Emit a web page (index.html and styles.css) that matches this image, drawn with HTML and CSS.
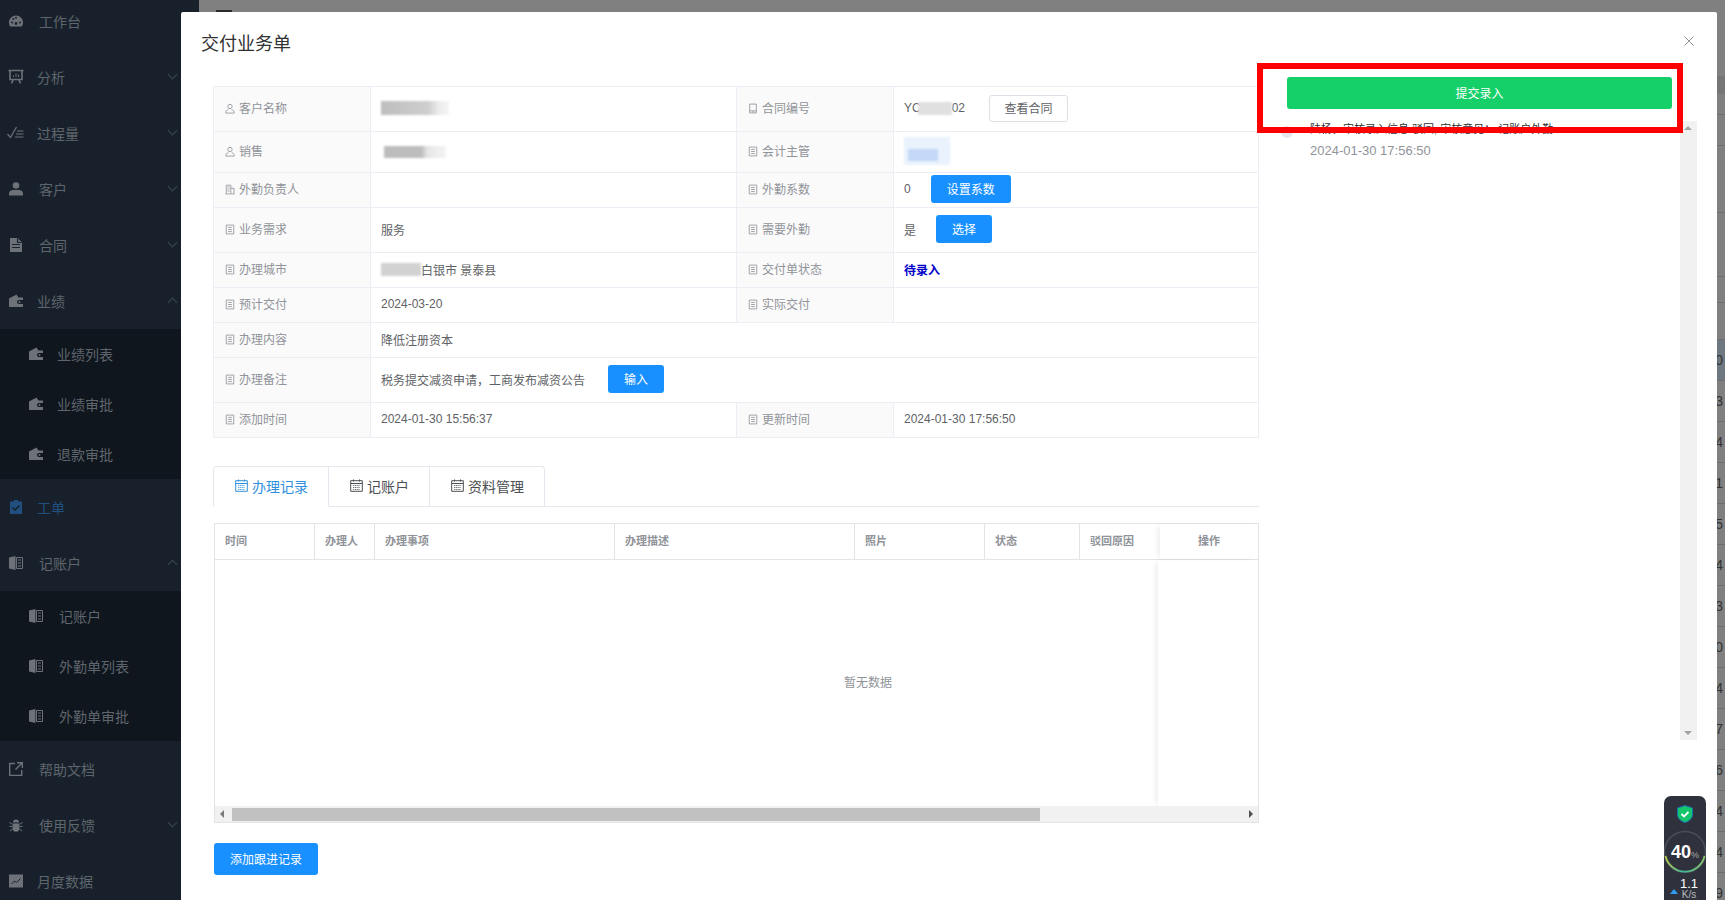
FILE: index.html
```html
<!DOCTYPE html>
<html lang="zh-CN">
<head>
    <meta charset="UTF-8">
    <title>交付业务单</title>
    <link rel="stylesheet" href="styles.css">
</head>
<body>

    <!-- Icon set -->
    <svg class="icon-defs" width="0" height="0">
        <defs>
            <linearGradient id="ring" x1="0" x2="1" y1="0" y2="0"><stop offset="0" stop-color="#b5c94a"/><stop offset=".45" stop-color="#3fb59a"/><stop offset="1" stop-color="#8cc46a"/></linearGradient>
        </defs>
        <symbol id="i-user" viewBox="0 0 12 12"><circle cx="6" cy="3.6" r="2.6" fill="none" stroke="currentColor"/><path d="M1 11.5v-1.2c0-1.6 1.6-2.6 3-2.8M11 11.5v-1.2c0-1.6-1.6-2.6-3-2.8M1 11.5h10" fill="none" stroke="currentColor"/></symbol>
        <symbol id="i-doc" viewBox="0 0 12 12"><path d="M1.500 .7h9v10.600h-9zM3.700 3.500h4.600M3.700 6h4.600M3.700 8.500h4.600" fill="none" stroke="currentColor"/></symbol>
        <symbol id="i-mobile" viewBox="0 0 12 12"><path d="M2 .7h8v10.600h-8zM2 8.800h8M5 10h2" fill="none" stroke="currentColor"/></symbol>
        <symbol id="i-office" viewBox="0 0 12 12"><path d="M1.500 11V.8h5.500V11M7 4.500h3.800V11M.5 11.300h11M3 3h2.500M3 5.500h2.500M3 8h2.500" fill="none" stroke="currentColor"/></symbol>
        <symbol id="i-date" viewBox="0 0 13 13"><path d="M.7 1.700h11.600v10.600h-11.600zM.7 4.500h11.600M3.500 .5v2M9.500 .5v2" fill="none" stroke="currentColor"/><path d="M3 6.500h7M3 8.500h7M3 10.500h7" fill="none" stroke="currentColor" stroke-width=".8" stroke-dasharray="1.200 .6"/></symbol>
        <symbol id="i-gauge" viewBox="0 0 14 14"><path d="M7 1.500a7 7 0 0 0-7 7c0 1.700.5 3 1.300 4h11.400c.8-1 1.300-2.300 1.300-4a7 7 0 0 0-7-7z" fill="currentColor"/><g fill="#18212b"><circle cx="3" cy="8.500" r="1"/><circle cx="4.300" cy="5" r="1"/><circle cx="7" cy="3.800" r="1"/><circle cx="11" cy="8.500" r="1"/><circle cx="7" cy="9.500" r="1.400"/></g></symbol>
        <symbol id="i-board" viewBox="0 0 16 16"><path d="M.5 1.500h15M2 2v8.500h12V2M5 11l-1.500 3.500M11 11l1.500 3.500" fill="none" stroke="currentColor" stroke-width="1.600"/><path d="M5.500 8V6.500M8 8V4.500M10.500 8V5.500" stroke="currentColor" fill="none"/></symbol>
        <symbol id="i-check" viewBox="0 0 17 14"><path d="M.5 8l3 3.500L9.500 1" fill="none" stroke="currentColor" stroke-width="1.200"/><path d="M10 5h6.500M9 8h7.500M8 11h8.500" fill="none" stroke="currentColor" stroke-width="1.200"/></symbol>
        <symbol id="i-person" viewBox="0 0 14 14"><circle cx="7" cy="3.500" r="3.300" fill="currentColor"/><path d="M0 13.500v-2c0-2.500 2.500-3.500 4.500-3.500h5c2 0 4.500 1 4.500 3.500v2z" fill="currentColor"/></symbol>
        <symbol id="i-file" viewBox="0 0 14 14"><path d="M1 0h7.500l4.500 4.500v9.500h-12z" fill="currentColor"/><path d="M3 6.500h8M3 9.500h8M8.500 .5v4h4" fill="none" stroke="#18212b" stroke-width="1.200"/></symbol>
        <symbol id="i-wallet" viewBox="0 0 14 14"><path d="M0 4.500l7.500-4 2 3h4.500v2.500h-4a2 2 0 0 0 0 4h4v3h-14z" fill="currentColor"/><circle cx="10.500" cy="8" r="1" fill="currentColor"/></symbol>
        <symbol id="i-clip" viewBox="0 0 14 14"><path d="M1 1.500h3.500a2.500 2 0 0 1 5 0h3.500v12.500h-12z" fill="currentColor"/><path d="M3.500 7.500l2.500 2.500 4.500-4.500" fill="none" stroke="#18212b" stroke-width="1.500"/></symbol>
        <symbol id="i-book" viewBox="0 0 14 14"><path d="M0 1.500l6.500-1.500v14l-6.500-1.500z" fill="currentColor"/><path d="M7.500 1.500h6v11h-6zM9 4h3M9 7h3M9 10h3" fill="none" stroke="currentColor"/></symbol>
        <symbol id="i-link" viewBox="0 0 14 14"><path d="M6 1.500h-5.300v12h12v-5.500M8 .7h5.300V6M13 1l-6.500 6.500" fill="none" stroke="currentColor" stroke-width="1.400"/></symbol>
        <symbol id="i-bug" viewBox="0 0 14 14"><path d="M4 4.500a3 3 0 0 1 6 0zM3.500 5.500h7v4.500a3.500 3.800 0 0 1-7 0z" fill="currentColor"/><path d="M3 6L.5 4.500M11 6l2.500-1.500M3 8.500H.5M11 8.500h2.500M3.500 11L1 13M10.500 11l2.500 2" stroke="currentColor" fill="none"/></symbol>
        <symbol id="i-chart" viewBox="0 0 14 14"><path d="M0 .5h14v13h-14z" fill="currentColor"/><path d="M2.500 10l3-3 2 1.500 4-4" fill="none" stroke="#18212b"/></symbol>
    </svg>

    <!-- Sidebar -->
    <aside class="sidebar">
        <div class="menu-item"><svg class="menu-icon"><use href="#i-gauge"/></svg><span>工作台</span></div>
        <div class="menu-item"><svg class="menu-icon icon-board"><use href="#i-board"/></svg><span class="tight">分析</span><i class="chevron"></i></div>
        <div class="menu-item"><svg class="menu-icon icon-check"><use href="#i-check"/></svg><span class="tight">过程量</span><i class="chevron"></i></div>
        <div class="menu-item"><svg class="menu-icon"><use href="#i-person"/></svg><span>客户</span><i class="chevron"></i></div>
        <div class="menu-item"><svg class="menu-icon"><use href="#i-file"/></svg><span>合同</span><i class="chevron"></i></div>
        <div class="menu-item"><svg class="menu-icon"><use href="#i-wallet"/></svg><span class="tight">业绩</span><i class="chevron up"></i></div>
        <div class="submenu">
            <div class="sub-item"><svg class="menu-icon"><use href="#i-wallet"/></svg><span>业绩列表</span></div>
            <div class="sub-item"><svg class="menu-icon"><use href="#i-wallet"/></svg><span>业绩审批</span></div>
            <div class="sub-item"><svg class="menu-icon"><use href="#i-wallet"/></svg><span>退款审批</span></div>
        </div>
        <div class="menu-item active"><svg class="menu-icon"><use href="#i-clip"/></svg><span class="tight">工单</span></div>
        <div class="menu-item"><svg class="menu-icon"><use href="#i-book"/></svg><span>记账户</span><i class="chevron up"></i></div>
        <div class="submenu">
            <div class="sub-item wide"><svg class="menu-icon"><use href="#i-book"/></svg><span>记账户</span></div>
            <div class="sub-item wide"><svg class="menu-icon"><use href="#i-book"/></svg><span>外勤单列表</span></div>
            <div class="sub-item wide"><svg class="menu-icon"><use href="#i-book"/></svg><span>外勤单审批</span></div>
        </div>
        <div class="menu-item"><svg class="menu-icon"><use href="#i-link"/></svg><span>帮助文档</span></div>
        <div class="menu-item"><svg class="menu-icon"><use href="#i-bug"/></svg><span>使用反馈</span><i class="chevron"></i></div>
        <div class="menu-item"><svg class="menu-icon"><use href="#i-chart"/></svg><span class="tight">月度数据</span></div>
    </aside>

    <!-- Page behind the dialog -->
    <main class="backdrop">
        <div class="back-top">
            <i class="back-hamburger"></i>
            <div class="back-band"></div>
            <div class="back-line h21"></div>
            <div class="back-line h31"></div>
            <div class="back-line h67"></div>
            <div class="back-line h64"></div>
            <div class="back-line h26"></div>
            <div class="back-line h37"></div>
        </div>
        <div class="back-row current">0</div>
        <div class="back-row">3</div>
        <div class="back-row">4</div>
        <div class="back-row">1</div>
        <div class="back-row">5</div>
        <div class="back-row">4</div>
        <div class="back-row">3</div>
        <div class="back-row">0</div>
        <div class="back-row">4</div>
        <div class="back-row">7</div>
        <div class="back-row">6</div>
        <div class="back-row">4</div>
        <div class="back-row">4</div>
        <div class="back-row">9</div>
    </main>

    <!-- Dialog -->
    <section class="modal">
        <div class="modal-header">
            <h2>交付业务单</h2>
            <svg class="modal-close" viewBox="0 0 10 10"><path d="M.5 .5l9 9M9.500 .5l-9 9" stroke="currentColor" fill="none"/></svg>
        </div>

        <div class="modal-body">
            <div class="main-col">
                <table class="info">
                    <colgroup><col class="c-label"><col class="c-value"><col class="c-label"><col></colgroup>
                    <tr class="h45">
                        <th><svg class="lb"><use href="#i-user"/></svg>客户名称</th>
                        <td><span class="blur blur-name"></span></td>
                        <th><svg class="lb"><use href="#i-mobile"/></svg>合同编号</th>
                        <td><div class="val">YC<span class="blur blur-no"></span>02<button class="btn plain">查看合同</button></div></td>
                    </tr>
                    <tr class="h41">
                        <th><svg class="lb"><use href="#i-user"/></svg>销售</th>
                        <td><span class="blur blur-sale"></span></td>
                        <th><svg class="lb"><use href="#i-doc"/></svg>会计主管</th>
                        <td><span class="blur blur-blue"></span></td>
                    </tr>
                    <tr class="h35">
                        <th><svg class="lb"><use href="#i-office"/></svg>外勤负责人</th>
                        <td></td>
                        <th><svg class="lb"><use href="#i-doc"/></svg>外勤系数</th>
                        <td><div class="val">0<button class="btn primary wide-btn">设置系数</button></div></td>
                    </tr>
                    <tr class="h45">
                        <th><svg class="lb"><use href="#i-doc"/></svg>业务需求</th>
                        <td>服务</td>
                        <th><svg class="lb"><use href="#i-doc"/></svg>需要外勤</th>
                        <td><div class="val">是<button class="btn primary">选择</button></div></td>
                    </tr>
                    <tr class="h35">
                        <th><svg class="lb"><use href="#i-doc"/></svg>办理城市</th>
                        <td><div class="val"><span class="blur blur-city"></span>白银市 景泰县</div></td>
                        <th><svg class="lb"><use href="#i-doc"/></svg>交付单状态</th>
                        <td class="status">待录入</td>
                    </tr>
                    <tr class="h35">
                        <th><svg class="lb"><use href="#i-doc"/></svg>预计交付</th>
                        <td>2024-03-20</td>
                        <th><svg class="lb"><use href="#i-doc"/></svg>实际交付</th>
                        <td></td>
                    </tr>
                    <tr class="h35">
                        <th><svg class="lb"><use href="#i-doc"/></svg>办理内容</th>
                        <td colspan="3">降低注册资本</td>
                    </tr>
                    <tr class="h45">
                        <th><svg class="lb"><use href="#i-doc"/></svg>办理备注</th>
                        <td colspan="3"><div class="val">税务提交减资申请，工商发布减资公告<button class="btn primary gap-23">输入</button></div></td>
                    </tr>
                    <tr class="h35">
                        <th><svg class="lb"><use href="#i-doc"/></svg>添加时间</th>
                        <td>2024-01-30 15:56:37</td>
                        <th><svg class="lb"><use href="#i-doc"/></svg>更新时间</th>
                        <td>2024-01-30 17:56:50</td>
                    </tr>
                </table>

                <div class="tabs">
                    <div class="tab active"><svg class="tab-icon"><use href="#i-date"/></svg>办理记录</div>
                    <div class="tab"><svg class="tab-icon"><use href="#i-date"/></svg>记账户</div>
                    <div class="tab"><svg class="tab-icon"><use href="#i-date"/></svg>资料管理</div>
                </div>

                <div class="records">
                    <div class="rec-head">
                        <div class="cell w100">时间</div>
                        <div class="cell w60">办理人</div>
                        <div class="cell w240">办理事项</div>
                        <div class="cell w240">办理描述</div>
                        <div class="cell w130">照片</div>
                        <div class="cell w95">状态</div>
                        <div class="cell w80">驳回原因</div>
                        <div class="cell op">操作</div>
                    </div>
                    <div class="rec-body">
                        <span>暂无数据</span>
                        <div class="fixed-col"></div>
                    </div>
                    <div class="hscroll">
                        <span class="arrow left"></span>
                        <div class="hscroll-thumb"></div>
                        <span class="arrow right"></span>
                    </div>
                </div>

                <button class="btn primary add-btn">添加跟进记录</button>
            </div>

            <div class="side-col">
                <button class="btn submit">提交录入</button>
                <div class="timeline">
                    <div class="tl-entry">
                        <i class="tl-dot"></i>
                        <div>
                            <p class="tl-text">陆杨，审核录入信息:驳回, 审核意见： 记账户外勤</p>
                            <p class="tl-time">2024-01-30 17:56:50</p>
                        </div>
                    </div>
                    <div class="vscroll"><span class="arrow up"></span><span class="arrow down"></span></div>
                </div>
            </div>
        </div>
    </section>

    <!-- Red box drawn on the screenshot -->
    <div class="mark"></div>

    <!-- Speed widget -->
    <div class="widget">
        <svg class="shield" viewBox="0 0 16 18"><path d="M8 .5l7.500 2.500v6.500c0 4-3.500 6.800-7.500 8-4-1.200-7.500-4-7.500-8V3z" fill="#13c56b" stroke="#1b6fb5"/><path d="M4.500 9l2.500 2.500 4.500-4.500" fill="none" stroke="#fff" stroke-width="1.800"/></svg>
        <div class="gauge">
            <svg viewBox="0 0 44 44"><circle cx="22" cy="22" r="20.500" fill="none" stroke="#4a4e59" stroke-width="1.500"/><path d="M2.500 26a20 20 0 0 0 39 0" fill="none" stroke="url(#ring)" stroke-width="1.800"/></svg>
            <div class="gauge-num">40<small>%</small></div>
        </div>
        <div class="speed">
            <i class="speed-arrow"></i>
            <div class="speed-num">1.1<small>K/s</small></div>
        </div>
    </div>

</body>
</html>
```

FILE: styles.css
```css
* {
    box-sizing: border-box;
}

html, body {
    height: 100%;
}

body {
    margin: 0;
    display: flex;
    overflow: hidden;
    font-family: "Liberation Sans", "Noto Sans CJK SC", sans-serif;
    font-size: 12px;
    color: #606266;
}

.icon-defs {
    position: absolute;
}

/* Sidebar */
.sidebar {
    width: 199px;
    flex: none;
    height: 900px;
    overflow: hidden;
    background-color: #18212b;
    color: #5f656c;
    font-size: 14px;
}

.menu-item {
    height: 56px;
    display: flex;
    align-items: center;
    padding-left: 9px;
    position: relative;
}

.menu-item:first-child {
    margin-top: -7px;
}

.menu-icon {
    width: 14px;
    height: 14px;
    flex: none;
    margin-right: 16px;
    color: #6d7278;
}

.icon-board {
    width: 16px;
    height: 16px;
    margin-left: -1px;
    margin-right: 15px;
}

.icon-check {
    width: 17px;
    margin-left: -2px;
    margin-right: 15px;
}

.menu-item .tight {
    margin-left: -2px;
}

.menu-item.active {
    color: #204f80;
}

.menu-item.active .menu-icon {
    color: #204f80;
}

.chevron {
    position: absolute;
    left: 169px;
    top: 22px;
    width: 7px;
    height: 7px;
    border-right: 1px solid #3c4651;
    border-bottom: 1px solid #3c4651;
    transform: rotate(45deg);
}

.chevron.up {
    top: 26px;
    transform: rotate(225deg);
}

.submenu {
    background-color: #0f161e;
}

.sub-item {
    height: 50px;
    display: flex;
    align-items: center;
    padding-left: 29px;
}

.sub-item .menu-icon {
    margin-right: 14px;
}

.sub-item.wide .menu-icon {
    margin-right: 16px;
}

/* Page behind the dialog */
.backdrop {
    flex: 1;
    height: 900px;
    overflow: hidden;
    background-color: #808080;
    color: #333;
    font-size: 14px;
    text-align: right;
}

.back-top {
    height: 340px;
    position: relative;
    padding-top: 76px;
}

.back-hamburger {
    position: absolute;
    left: 17px;
    top: 10px;
    width: 16px;
    height: 2px;
    background-color: #2b2b2b;
}

.back-band {
    height: 18px;
    background-color: #767676;
}

.back-line {
    border-bottom: 1px solid #6e6e6e;
}

.h21 { height: 21px; }
.h31 { height: 31px; }
.h67 { height: 67px; }
.h64 { height: 64px; }
.h26 { height: 26px; }
.h37 { height: 37px; }

.back-row {
    height: 41px;
    line-height: 40px;
    padding-right: 2px;
    overflow: hidden;
    border-bottom: 1px solid #6e6e6e;
}

.back-row.current {
    background-color: #6f7780;
}

/* Dialog */
.modal {
    position: absolute;
    left: 181px;
    top: 12px;
    right: 8px;
    bottom: 0;
    background-color: #fff;
    border-radius: 2px 2px 0 0;
    overflow: hidden;
}

.modal-header {
    height: 62px;
    padding: 20px 20px 0;
    display: flex;
    justify-content: space-between;
}

.modal-header h2 {
    margin: 0;
    font-size: 18px;
    font-weight: normal;
    line-height: 24px;
    color: #303133;
}

.modal-close {
    width: 10px;
    height: 10px;
    margin: 4px 3px 0 0;
    color: #909399;
}

.modal-body {
    display: flex;
    padding: 12px 0 0 32px;
}

.main-col {
    width: 1046px;
    flex: none;
}

/* Info table */
.info {
    width: 100%;
    border-collapse: collapse;
    table-layout: fixed;
}

.c-label {
    width: 157px;
}

.c-value {
    width: 366px;
}

.info th, .info td {
    border: 1px solid #ebeef5;
    padding: 0 10px 2px;
    white-space: nowrap;
    font-size: 12px;
    vertical-align: middle;
}

.info th {
    padding-bottom: 4px;
    background-color: #fafafa;
    color: #909399;
    font-weight: normal;
    text-align: left;
}

.h45 { height: 45px; }
.h41 { height: 41px; }
.h35 { height: 35px; }

.lb {
    width: 10px;
    height: 11px;
    margin: 0 4px 0 1px;
    vertical-align: -1px;
}

.val {
    display: flex;
    align-items: center;
}

.status {
    color: #0000c8;
    font-weight: bold;
}

/* Redactions */
.blur {
    display: inline-block;
    vertical-align: middle;
    filter: blur(1.2px);
}

.blur-name {
    width: 68px;
    height: 14px;
    background: linear-gradient(90deg, #bdbdbd 0, #cfcfcf 70%, #ececec 85%, #f6f6f6 100%);
}

.blur-sale {
    width: 62px;
    height: 12px;
    margin-left: 3px;
    background: linear-gradient(90deg, #bdbdbd 0, #bdbdbd 60%, #e6e6e6 70%, #f5f5f5 100%);
}

.blur-city {
    width: 40px;
    height: 13px;
    background: #d2d2d2;
}

.blur-no {
    width: 34px;
    height: 13px;
    margin-left: -3px;
    background: #e0e0e0;
}

.blur-blue {
    width: 46px;
    height: 28px;
    background: linear-gradient(#c3d8f7, #c3d8f7) 4px 12px / 30px 12px no-repeat, #e9f2fd;
}

/* Buttons */
.btn {
    display: inline-block;
    flex: none;
    height: 28px;
    padding: 0 16px 1px;
    border: none;
    border-radius: 3px;
    font-family: inherit;
    font-size: 12px;
    cursor: pointer;
    vertical-align: middle;
}

.primary {
    margin-left: 20px;
    background-color: #1890ff;
    color: #fff;
}

.wide-btn {
    width: 80px;
    padding: 0 0 1px;
}

.plain {
    height: 27px;
    width: 79px;
    margin-left: 24px;
    padding: 0 0 1px;
    background-color: #fff;
    border: 1px solid #dcdfe6;
    color: #606266;
}

.gap-23 { margin-left: 23px; }

/* Tabs */
.tabs {
    display: flex;
    margin-top: 28px;
    height: 41px;
    border-bottom: 1px solid #e4e7ed;
}

.tab {
    display: flex;
    align-items: center;
    height: 41px;
    padding: 0 20px 2px 21px;
    border: 1px solid #e4e7ed;
    border-left: none;
    font-size: 14px;
    white-space: nowrap;
    color: #4d4f53;
}

.tab:last-child {
    border-radius: 0 4px 0 0;
}

.tab.active {
    border-left: 1px solid #e4e7ed;
    border-bottom-color: #fff;
    border-radius: 4px 0 0 0;
    color: #2f8fdc;
}

.tab-icon {
    width: 13px;
    height: 13px;
    margin-right: 4px;
}

/* Records table */
.records {
    margin: 16px 1px 0;
    width: 1045px;
    border: 1px solid #e4e4e4;
}

.rec-head {
    display: flex;
    height: 36px;
    border-bottom: 1px solid #e4e4e4;
    font-size: 11px;
    font-weight: bold;
    color: #909399;
    white-space: nowrap;
}

.cell {
    display: flex;
    align-items: center;
    padding: 0 0 4px 10px;
    border-right: 1px solid #e4e4e4;
    flex: none;
    height: 35px;
}

.w100 { width: 100px; }
.w60 { width: 60px; }
.w240 { width: 240px; }
.w130 { width: 130px; }
.w95 { width: 95px; }
.w80 { width: 80px; border-right: none; }

.cell.op {
    flex: 1;
    padding-left: 0;
    justify-content: center;
    border-right: none;
    box-shadow: -4px 0 6px -2px rgba(0, 0, 0, 0.08);
}

.rec-body {
    height: 246px;
    position: relative;
    display: flex;
    align-items: center;
    justify-content: center;
    padding: 0 0 3px 263px;
    color: #909399;
}

.fixed-col {
    position: absolute;
    right: 0;
    top: 0;
    bottom: 0;
    width: 100px;
    box-shadow: -4px 0 6px -2px rgba(0, 0, 0, 0.08);
}

.hscroll {
    height: 16px;
    background-color: #f1f1f1;
    display: flex;
    align-items: center;
    padding-right: 17px;
    position: relative;
}

.hscroll-thumb {
    margin-left: 17px;
    width: 808px;
    height: 13px;
    background-color: #c1c1c1;
}

.arrow {
    position: absolute;
    width: 0;
    height: 0;
    border: 4px solid transparent;
}

.arrow.left {
    left: 1px;
    top: 4px;
    border-right-color: #7a7a7a;
}

.arrow.right {
    right: 1px;
    top: 4px;
    border-left-color: #505050;
}

.arrow.up {
    left: 4px;
    top: 1px;
    border-bottom-color: #a3a3a3;
}

.arrow.down {
    left: 4px;
    bottom: 1px;
    border-top-color: #a3a3a3;
}

.add-btn {
    display: block;
    width: 104px;
    height: 32px;
    margin: 20px 0 0 1px;
    padding: 0 0 1px;
}

/* Right column */
.side-col {
    margin-left: 28px;
    width: 410px;
    flex: none;
}

.submit {
    display: block;
    width: 385px;
    height: 32px;
    margin-top: -9px;
    background-color: #15cf68;
    color: #fff;
}

.timeline {
    position: relative;
    height: 619px;
    margin-top: 12px;
}

.tl-entry {
    display: flex;
}

.tl-dot {
    width: 12px;
    height: 12px;
    margin: 5px 17px 0 -6px;
    border-radius: 50%;
    background-color: #e4e7ed;
    flex: none;
}

.tl-text {
    margin: 0;
    font-size: 11px;
    line-height: 14px;
    padding-top: 1px;
    color: #303133;
}

.tl-time {
    margin: 7px 0 0;
    font-size: 13px;
    line-height: 16px;
    color: #909399;
}

.vscroll {
    position: absolute;
    left: 393px;
    top: 0;
    bottom: 0;
    width: 17px;
    background-color: #f1f1f1;
}

/* Annotation */
.mark {
    position: absolute;
    left: 1257px;
    top: 63px;
    width: 426px;
    height: 70px;
    border: 6px solid #ff0000;
}

/* Speed widget */
.widget {
    position: absolute;
    left: 1664px;
    top: 796px;
    width: 42px;
    height: 104px;
    overflow: hidden;
    border-radius: 7px 7px 0 0;
    background-color: #2f323d;
    color: #fff;
    display: flex;
    flex-direction: column;
    align-items: center;
}

.shield {
    width: 16px;
    height: 18px;
    flex: none;
    margin-top: 9px;
}

.gauge {
    position: relative;
    width: 44px;
    height: 44px;
    margin: 7px -1px 0;
    flex: none;
}

.gauge svg {
    width: 44px;
    height: 44px;
    display: block;
}

.gauge-num {
    position: absolute;
    inset: 0;
    display: flex;
    align-items: center;
    justify-content: center;
    font-size: 18px;
    font-weight: bold;
    padding-top: 1px;
}

.gauge-num small {
    font-size: 9px;
    font-weight: normal;
    color: #aaa;
    margin-top: 5px;
}

.speed {
    display: flex;
    align-items: center;
    flex: none;
    margin-top: 4px;
}

.speed-arrow {
    width: 0;
    height: 0;
    margin: 4px 2px 0 -2px;
    border: 4px solid transparent;
    border-top: none;
    border-bottom: 5px solid #2d9cf0;
}

.speed-num {
    font-size: 13px;
    line-height: 12px;
    text-align: center;
}

.speed-num small {
    display: block;
    font-size: 10px;
    line-height: 10px;
    color: #bbb;
}
```
